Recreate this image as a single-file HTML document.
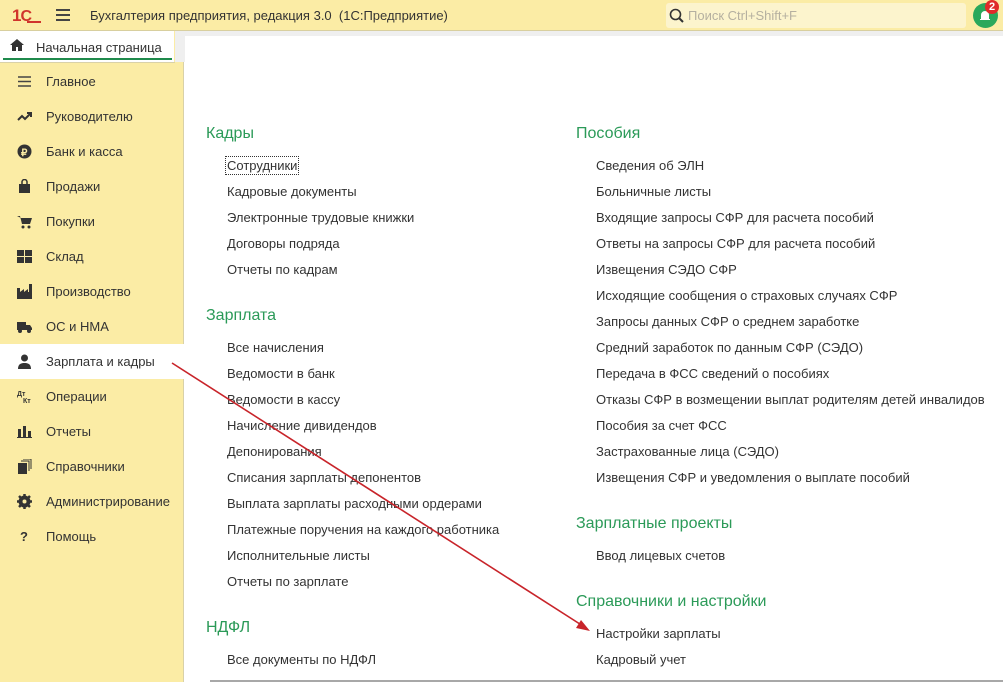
<!DOCTYPE html><html><head><meta charset="utf-8"><style>
*{margin:0;padding:0;box-sizing:border-box}
body{width:1003px;height:682px;overflow:hidden;background:#fff;font-family:"Liberation Sans",sans-serif;color:#333;position:relative}
.top{position:absolute;left:0;top:0;width:1003px;height:31px;background:#fbeca5;border-bottom:1px solid #d8cf9f}
.abs{position:absolute;white-space:nowrap}
.side{position:absolute;left:0;top:31px;width:184px;height:651px;background:#fbeca5;border-right:1px solid #d9d1a8}
.tab{position:absolute;left:0;top:31px;width:174px;height:31px;background:#fff}
.gray{position:absolute;left:175px;top:31px;width:828px;height:5px;background:#efefef}
.gap{position:absolute;left:175px;top:31px;width:10px;height:31px;background:#efefef}
.it{position:absolute;left:0;width:184px;height:35px;font-size:13px;line-height:35px;padding-left:46px;color:#333}
.ic{position:absolute;left:17px;top:10px;width:15px;height:15px}
.h{position:absolute;font-size:16px;color:#2b9a58;white-space:nowrap}
.l{position:absolute;font-size:13px;color:#333;white-space:nowrap}
</style></head><body>
<div class="top"></div>
<div class="abs" style="left:12px;top:6px;font-size:17px;font-weight:bold;color:#d0342c;letter-spacing:-1px">1<span style="font-size:16px">C</span></div>
<div class="abs" style="left:27px;top:21px;width:14px;height:2px;background:#d0342c"></div>
<div class="abs" style="left:56px;top:9px;width:14px;height:2px;background:#444;box-shadow:0 5px 0 #444,0 10px 0 #444"></div>
<div class="abs" style="left:90px;top:8px;font-size:13px;color:#333">Бухгалтерия предприятия, редакция 3.0&nbsp; (1С:Предприятие)</div>
<div class="abs" style="left:666px;top:3px;width:300px;height:25px;background:#fcf4cd;border-radius:3px"></div>
<svg class="abs" style="left:669px;top:8px" width="16" height="16"><circle cx="6.5" cy="6.5" r="5" fill="none" stroke="#333" stroke-width="1.6"/><path d="M10 10l4 4" stroke="#333" stroke-width="2"/></svg>
<div class="abs" style="left:688px;top:8px;font-size:13px;color:#b5b0a0">Поиск Ctrl+Shift+F</div>
<div class="abs" style="left:973px;top:3px;width:25px;height:25px;border-radius:50%;background:#2aa85b"></div>
<svg class="abs" style="left:978px;top:8px" width="14" height="14"><path d="M3 11V7a4 4 0 018 0v4h1v1H2v-1z" fill="#fff"/></svg>
<div class="abs" style="left:985px;top:0px;width:14px;height:14px;border-radius:50%;background:#e02a2a;color:#fff;font-size:11px;font-weight:bold;text-align:center;line-height:14px">2</div>

<div class="side"></div>
<div class="gray"></div><div class="gap"></div>
<div class="tab"></div>
<svg class="abs" style="left:10px;top:39px" width="14" height="12"><path d="M7 0L0 6h2v6h4V8h2v4h4V6h2z" fill="#333"/></svg>
<div class="abs" style="left:36px;top:40px;font-size:13px;color:#333">Начальная страница</div>
<div class="abs" style="left:3px;top:58px;width:169px;height:2px;background:#1f8a4c"></div>
<div class="abs" style="left:0;top:62px;width:175px;height:1px;background:#d9d1a8"></div>

<div class="it" style="top:64px"><svg class="ic" viewBox="0 0 15 15"><path d="M1 3h13M1 7.5h13M1 12h13" stroke="#444" stroke-width="1.4"/></svg>Главное</div>
<div class="it" style="top:99px"><svg class="ic" viewBox="0 0 15 15"><path d="M1 11l4-4 3 3 6-6M10 4h4v4" stroke="#333" stroke-width="2" fill="none"/></svg>Руководителю</div>
<div class="it" style="top:134px"><svg class="ic" viewBox="0 0 15 15"><circle cx="7.5" cy="7.5" r="7" fill="#333"/><text x="4" y="12" font-size="10" fill="#fbeca5" font-weight="bold">₽</text></svg>Банк и касса</div>
<div class="it" style="top:169px"><svg class="ic" viewBox="0 0 15 15"><path d="M2 5h11v9H2z" fill="#333"/><path d="M5 5V3a2.5 2.5 0 015 0v2" stroke="#333" fill="none" stroke-width="1.5"/></svg>Продажи</div>
<div class="it" style="top:204px"><svg class="ic" viewBox="0 0 15 15"><path d="M0 2h3l2 8h8l2-6H4" fill="#333"/><circle cx="6" cy="13" r="1.5" fill="#333"/><circle cx="12" cy="13" r="1.5" fill="#333"/></svg>Покупки</div>
<div class="it" style="top:239px"><svg class="ic" viewBox="0 0 15 15"><path d="M0 1h7v6H0zM8 1h7v6H8zM0 8h7v6H0zM8 8h7v6H8z" fill="#333"/></svg>Склад</div>
<div class="it" style="top:274px"><svg class="ic" viewBox="0 0 15 15"><path d="M0 15V4h3v4l4-3v3l4-3v3h1V0h3v15z" fill="#333"/></svg>Производство</div>
<div class="it" style="top:309px"><svg class="ic" viewBox="0 0 15 15"><path d="M0 3h9v8H0zM9 6h4l2 3v2H9z" fill="#333"/><circle cx="3" cy="12" r="2" fill="#333"/><circle cx="12" cy="12" r="2" fill="#333"/></svg>ОС и НМА</div>
<div class="it" style="top:344px;background:#fff"><svg class="ic" viewBox="0 0 15 15"><circle cx="7.5" cy="4" r="3.5" fill="#333"/><path d="M1 15c0-5 3-6 6.5-6s6.5 1 6.5 6z" fill="#333"/></svg>Зарплата и кадры</div>
<div class="it" style="top:379px"><svg class="ic" viewBox="0 0 15 15"><text x="0" y="7" font-size="7" font-weight="bold" fill="#333">Дт</text><text x="6" y="14" font-size="7" font-weight="bold" fill="#333">Кт</text></svg>Операции</div>
<div class="it" style="top:414px"><svg class="ic" viewBox="0 0 15 15"><path d="M1 5h3v8H1zM6 2h3v11H6zM11 7h3v6h-3zM0 13h15v1H0z" fill="#333"/></svg>Отчеты</div>
<div class="it" style="top:449px"><svg class="ic" viewBox="0 0 15 15"><path d="M1 4h9v11H1z" fill="#333"/><path d="M4 2h8v10M6 0h8v10" stroke="#333" fill="none"/></svg>Справочники</div>
<div class="it" style="top:484px"><svg class="ic" viewBox="0 0 15 15"><circle cx="7.5" cy="7.5" r="4.5" fill="none" stroke="#333" stroke-width="3"/><path d="M7.5 0v15M0 7.5h15M2 2l11 11M13 2L2 13" stroke="#333" stroke-width="2.5"/><circle cx="7.5" cy="7.5" r="2" fill="#fbeca5"/></svg>Администрирование</div>
<div class="it" style="top:519px"><span style="position:absolute;left:20px;font-weight:bold">?</span>Помощь</div>

<div class="h" style="left:206px;top:125px">Кадры</div>
<div class="l" style="left:225px;top:156px;border:1px dotted #333;padding:1px 1px">Сотрудники</div>
<div class="l" style="left:227px;top:184px">Кадровые документы</div>
<div class="l" style="left:227px;top:210px">Электронные трудовые книжки</div>
<div class="l" style="left:227px;top:236px">Договоры подряда</div>
<div class="l" style="left:227px;top:262px">Отчеты по кадрам</div>
<div class="h" style="left:206px;top:307px">Зарплата</div>
<div class="l" style="left:227px;top:340px">Все начисления</div>
<div class="l" style="left:227px;top:366px">Ведомости в банк</div>
<div class="l" style="left:227px;top:392px">Ведомости в кассу</div>
<div class="l" style="left:227px;top:418px">Начисление дивидендов</div>
<div class="l" style="left:227px;top:444px">Депонирования</div>
<div class="l" style="left:227px;top:470px">Списания зарплаты депонентов</div>
<div class="l" style="left:227px;top:496px">Выплата зарплаты расходными ордерами</div>
<div class="l" style="left:227px;top:522px">Платежные поручения на каждого работника</div>
<div class="l" style="left:227px;top:548px">Исполнительные листы</div>
<div class="l" style="left:227px;top:574px">Отчеты по зарплате</div>
<div class="h" style="left:206px;top:619px">НДФЛ</div>
<div class="l" style="left:227px;top:652px">Все документы по НДФЛ</div>

<div class="h" style="left:576px;top:125px">Пособия</div>
<div class="l" style="left:596px;top:158px">Сведения об ЭЛН</div>
<div class="l" style="left:596px;top:184px">Больничные листы</div>
<div class="l" style="left:596px;top:210px">Входящие запросы СФР для расчета пособий</div>
<div class="l" style="left:596px;top:236px">Ответы на запросы СФР для расчета пособий</div>
<div class="l" style="left:596px;top:262px">Извещения СЭДО СФР</div>
<div class="l" style="left:596px;top:288px">Исходящие сообщения о страховых случаях СФР</div>
<div class="l" style="left:596px;top:314px">Запросы данных СФР о среднем заработке</div>
<div class="l" style="left:596px;top:340px">Средний заработок по данным СФР (СЭДО)</div>
<div class="l" style="left:596px;top:366px">Передача в ФСС сведений о пособиях</div>
<div class="l" style="left:596px;top:392px">Отказы СФР в возмещении выплат родителям детей инвалидов</div>
<div class="l" style="left:596px;top:418px">Пособия за счет ФСС</div>
<div class="l" style="left:596px;top:444px">Застрахованные лица (СЭДО)</div>
<div class="l" style="left:596px;top:470px">Извещения СФР и уведомления о выплате пособий</div>
<div class="h" style="left:576px;top:515px">Зарплатные проекты</div>
<div class="l" style="left:596px;top:548px">Ввод лицевых счетов</div>
<div class="h" style="left:576px;top:593px">Справочники и настройки</div>
<div class="l" style="left:596px;top:626px">Настройки зарплаты</div>
<div class="l" style="left:596px;top:652px">Кадровый учет</div>

<div class="abs" style="left:210px;top:680px;width:793px;height:2px;background:#a8a8a8"></div>
<svg class="abs" style="left:0;top:0" width="1003" height="682"><path d="M172 363L583 626" stroke="#c8242a" stroke-width="1.6"/><path d="M590 631l-14-3 5-8z" fill="#c8242a"/></svg>
</body></html>
